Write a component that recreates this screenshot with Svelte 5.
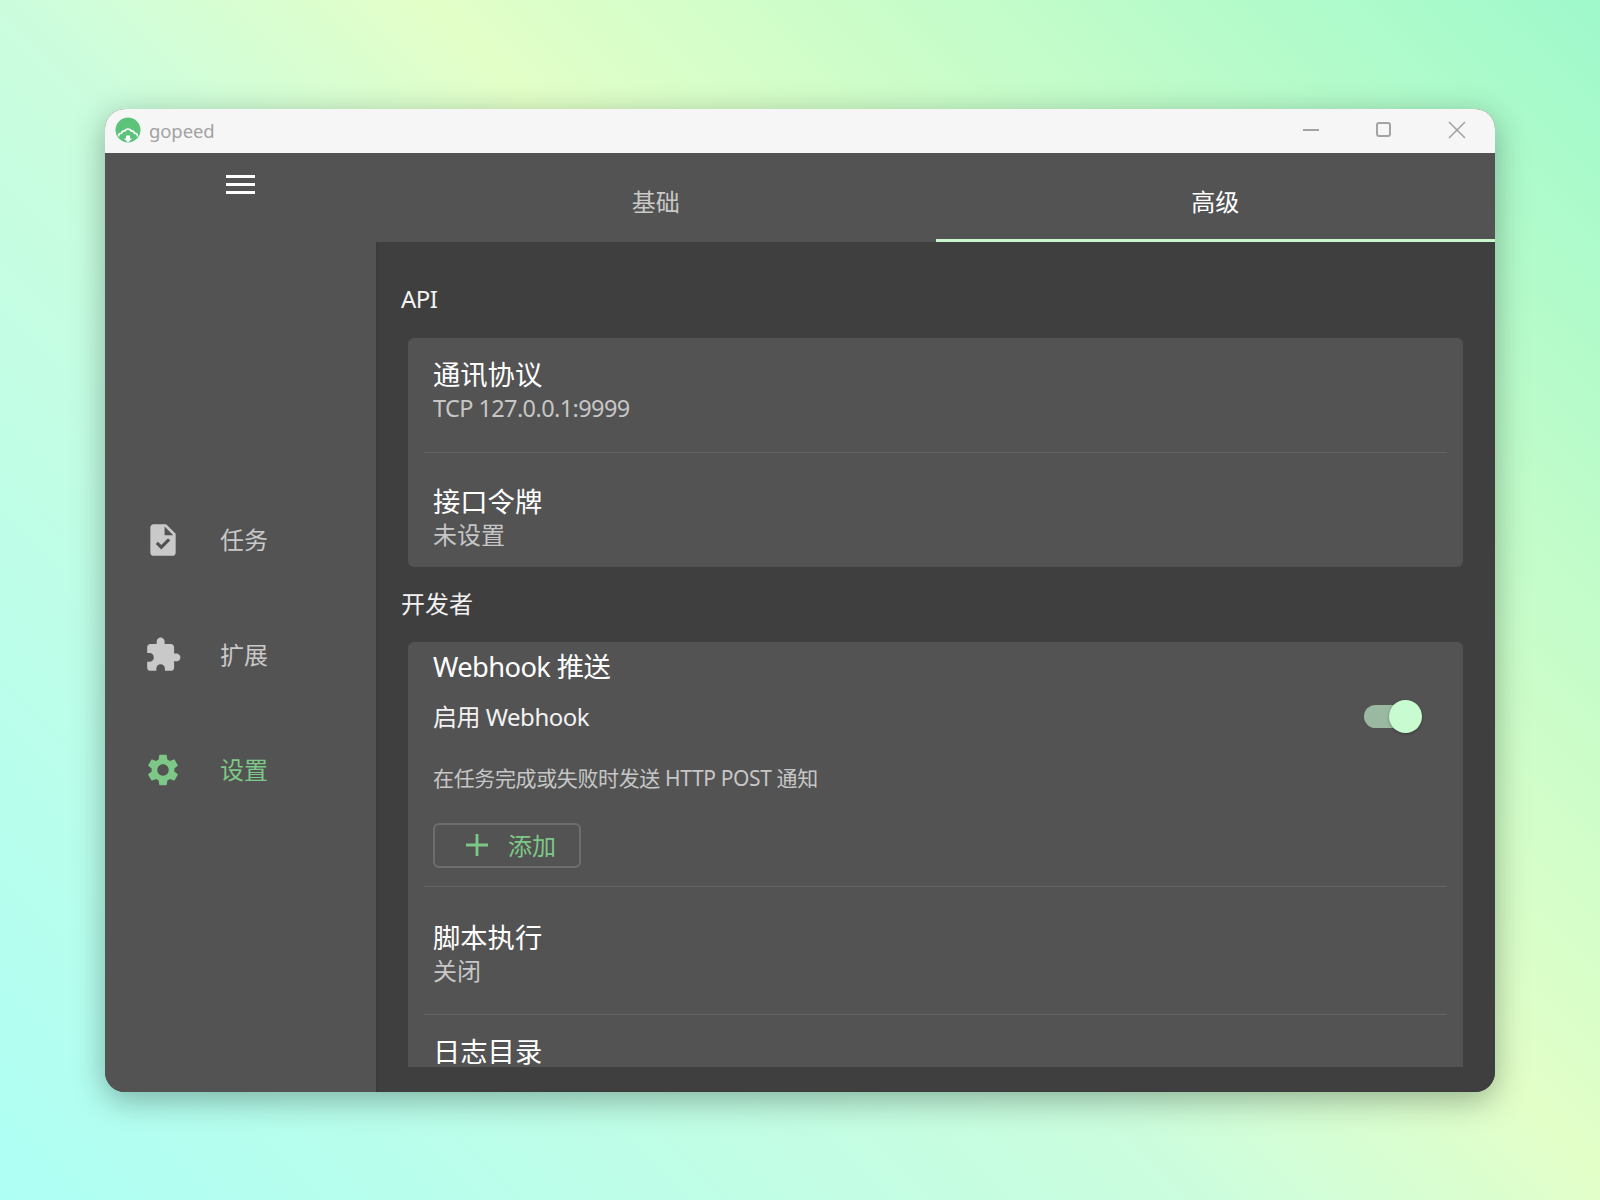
<script>
  const nav = [
    { label: '任务', d: 'M14 2H6c-1.1 0-1.99.9-1.99 2L4 20c0 1.1.89 2 1.99 2H18c1.1 0 2-.9 2-2V8l-6-6zm-3.06 16L7.4 14.46l1.41-1.41 2.12 2.12 4.24-4.24 1.41 1.41L10.94 18zM13 9V3.5L18.5 9H13z' },
    { label: '扩展', d: 'M20.5 11H19V7c0-1.1-.9-2-2-2h-4V3.5C13 2.12 11.88 1 10.5 1S8 2.12 8 3.5V5H4c-1.1 0-1.99.9-1.99 2v3.8H3.5c1.49 0 2.7 1.21 2.7 2.7s-1.21 2.7-2.7 2.7H2V20c0 1.1.9 2 2 2h3.8v-1.5c0-1.49 1.21-2.7 2.7-2.7 1.49 0 2.7 1.21 2.7 2.7V22H17c1.1 0 2-.9 2-2v-4h1.5c1.38 0 2.5-1.12 2.5-2.5S21.88 11 20.5 11z' },
    { label: '设置', active: true, d: 'M19.14 12.94c.04-.3.06-.61.06-.94 0-.32-.02-.64-.07-.94l2.03-1.58c.18-.14.23-.41.12-.61l-1.92-3.32c-.12-.22-.37-.29-.59-.22l-2.39.96c-.5-.38-1.03-.7-1.62-.94l-.36-2.54c-.04-.24-.24-.41-.48-.41h-3.84c-.24 0-.43.17-.47.41l-.36 2.54c-.59.24-1.13.57-1.62.94l-2.39-.96c-.22-.08-.47 0-.59.22L2.74 8.87c-.12.21-.08.47.12.61l2.03 1.58c-.05.3-.09.63-.09.94s.02.64.07.94l-2.03 1.58c-.18.14-.23.41-.12.61l1.92 3.32c.12.22.37.29.59.22l2.39-.96c.5.38 1.03.7 1.62.94l.36 2.54c.05.24.24.41.48.41h3.84c.24 0 .44-.17.47-.41l.36-2.54c.59-.24 1.13-.56 1.62-.94l2.39.96c.22.08.47 0 .59-.22l1.92-3.32c.12-.22.07-.47-.12-.61l-2.01-1.58zM12 15.6c-1.98 0-3.6-1.62-3.6-3.6s1.62-3.6 3.6-3.6 3.6 1.62 3.6 3.6-1.62 3.6-3.6 3.6z' }
  ]
</script>

<div class="page">
  <div class="window">
    <header class="titlebar">
      <svg class="logo" viewBox="0 0 26 26">
        <circle cx="13" cy="13" r="12.5" fill="#5cc47a" />
        <path d="M3.500 19.500c0-2.500 1.500-3.500 3-3.200 .5-2 2-2.800 3.200-2.300C10.500 12.500 11.800 12 13 12s2.500.5 3.300 2c1.200-.5 2.700.3 3.200 2.300 1.500-.3 3 .7 3 3.200" fill="none" stroke="#fff" stroke-width="1.600" />
        <path d="M11 18.500h4v3h2.200L13 25.500 8.800 21.500H11z" fill="#fff" />
      </svg>
      <span class="brand">gopeed</span>
      <div class="controls">
        <button aria-label="minimize"><span class="min"></span></button>
        <button aria-label="maximize"><span class="max"></span></button>
        <button aria-label="close">
          <svg width="18" height="18" viewBox="0 0 18 18"><path d="M1 1l16 16M17 1L1 17" stroke="#a3a3a3" stroke-width="1.600" /></svg>
        </button>
      </div>
    </header>

    <div class="body">
      <aside class="rail">
        <div class="burger"><i></i><i></i><i></i></div>
        <nav>
          {#each nav as item}
            <div class="dest" class:active={item.active}>
              <svg viewBox="0 0 24 24" width="38" height="38"><path d={item.d} fill="currentColor" /></svg>
              <span>{item.label}</span>
            </div>
          {/each}
        </nav>
      </aside>

      <main>
        <div class="tabs">
          <div class="tab">基础</div>
          <div class="tab selected">高级</div>
        </div>

        <div class="scroll">
          <h2 class="first">API</h2>
          <section class="card">
            <div class="tile">
              <div class="title">通讯协议</div>
              <div class="sub latin">TCP 127.0.0.1:9999</div>
            </div>
            <hr />
            <div class="tile low">
              <div class="title">接口令牌</div>
              <div class="sub">未设置</div>
            </div>
          </section>

          <h2>开发者</h2>
          <section class="card">
            <div class="webhook">
              <div class="title wh">Webhook 推送</div>
              <div class="enable">
                <span>启用 Webhook</span>
                <div class="switch"><span class="thumb"></span></div>
              </div>
              <p>在任务完成或失败时发送 HTTP POST 通知</p>
              <button class="add">
                <svg width="26" height="26" viewBox="0 0 26 26"><path d="M13 2v22M2 13h22" stroke="currentColor" stroke-width="2.800" /></svg>
                <span>添加</span>
              </button>
            </div>
            <hr />
            <div class="tile low tall">
              <div class="title">脚本执行</div>
              <div class="sub">关闭</div>
            </div>
            <hr />
            <div class="tile">
              <div class="title">日志目录</div>
            </div>
          </section>
        </div>
      </main>
    </div>
  </div>
</div>

<style>
  :global(body) {
    margin: 0;
    font-family: "Noto Sans", "Noto Sans CJK SC", sans-serif;
  }

  .page {
    height: 1200px;
    box-sizing: border-box;
    padding: 109px 105px 108px;
    background: linear-gradient(45deg, #aefff5 0%, #cbfddd 43%, #e3ffc8 58%, #9ff9cb 100%);
  }

  .window {
    height: 983px;
    display: flex;
    flex-direction: column;
    border-radius: 20px;
    overflow: hidden;
    background: #535353;
    box-shadow: 0 8px 32px rgba(20, 40, 30, .36);
  }

  .titlebar {
    height: 44px;
    flex: none;
    display: flex;
    align-items: center;
    padding-left: 10px;
    background: #f6f6f6;
  }

  .logo {
    width: 26px;
    height: 26px;
    margin-top: -2px;
  }

  .brand {
    margin: 0 0 2px 8px;
    color: #a2a2a2;
    font-size: 18.500px;
    letter-spacing: -.1px;
  }

  .controls {
    margin-left: auto;
    display: flex;
    padding-right: 2px;
  }

  .controls button {
    width: 73px;
    height: 44px;
    padding: 0 0 3px;
    background: none;
    border: none;
    display: flex;
    align-items: center;
    justify-content: center;
  }

  .min {
    width: 16px;
    height: 2px;
    background: #a3a3a3;
  }

  .max {
    width: 15px;
    height: 15px;
    border: 2px solid #a3a3a3;
    border-radius: 3px;
    box-sizing: border-box;
  }

  .body {
    flex: 1;
    min-height: 0;
    display: flex;
  }

  .rail {
    width: 271px;
    flex: none;
    background: #535353;
  }

  .burger {
    width: 29px;
    margin: 22px 0 0 121px;
    display: flex;
    flex-direction: column;
    gap: 5px;
  }

  .burger i {
    height: 3px;
    background: #fff;
  }

  nav {
    margin-top: 327px;
    display: flex;
    flex-direction: column;
    gap: 77px;
  }

  .dest {
    height: 38px;
    display: flex;
    align-items: center;
    padding-left: 39px;
    color: #c9c9c9;
    font-size: 24px;
  }

  .dest span {
    margin: 0 0 4px 38px;
  }

  .dest.active {
    color: #7dc887;
  }

  main {
    flex: 1;
    min-width: 0;
    display: flex;
    flex-direction: column;
    background: #3f3f3f;
    box-shadow: inset 2px 0 3px rgba(0, 0, 0, .08);
  }

  .tabs {
    height: 89px;
    flex: none;
    box-sizing: border-box;
    display: flex;
    background: #535353;
  }

  .tab {
    flex: 1;
    display: flex;
    align-items: center;
    justify-content: center;
    padding-top: 8px;
    color: #c9c9c9;
    font-size: 24px;
    border-bottom: 3px solid transparent;
  }

  .tab.selected {
    color: #fff;
    border-bottom-color: #c8f7cd;
  }

  .scroll {
    flex: 1;
    min-height: 0;
    margin-bottom: 25px;
    padding: 0 32px 0 25px;
    overflow: hidden;
  }

  h2 {
    margin: 0 0 22px;
    height: 33px;
    line-height: 33px;
    color: #f2f2f2;
    font-size: 24px;
    font-weight: 400;
  }

  h2.first {
    margin-top: 40px;
    margin-bottom: 23px;
    letter-spacing: -.6px;
  }

  .card {
    margin: 0 0 20px 7px;
    border-radius: 6px;
    background: #535353;
  }

  .tile {
    height: 114px;
    box-sizing: border-box;
    padding: 18px 25px 0;
  }

  .tile.low {
    padding-top: 30px;
  }

  .tile.tall {
    height: 127px;
    padding-top: 32px;
  }

  .title {
    color: #fff;
    font-size: 27.300px;
    line-height: 38px;
  }

  .sub {
    margin-top: -3px;
    color: #c6c6c6;
    font-size: 24px;
    line-height: 33px;
  }

  .sub.latin {
    margin-top: -2px;
    font-size: 23.500px;
    letter-spacing: -.6px;
  }

  hr {
    margin: 0 16px;
    border: none;
    border-top: 1px solid #636363;
  }

  .webhook {
    height: 244px;
    box-sizing: border-box;
    padding: 6px 25px 0;
  }

  .wh {
    line-height: 38px;
    letter-spacing: -.6px;
  }

  .enable {
    margin-top: 11px;
    height: 36px;
    display: flex;
    align-items: center;
    justify-content: space-between;
    color: #f2f2f2;
    font-size: 24px;
    letter-spacing: -.5px;
    padding-right: 23px;
  }

  .switch {
    position: relative;
    width: 51px;
    height: 23px;
    margin-top: 2px;
    border-radius: 12px;
    background: #9bb9a0;
  }

  .thumb {
    position: absolute;
    right: -7px;
    top: -5px;
    width: 33px;
    height: 33px;
    border-radius: 50%;
    background: #c8fbd0;
    box-shadow: 0 1px 3px rgba(0, 0, 0, .3);
  }

  p {
    margin: 30px 0 0;
    color: #c6c6c6;
    font-size: 21px;
    letter-spacing: -.37px;
    line-height: 30px;
  }

  .add {
    margin-top: 30px;
    width: 148px;
    height: 45px;
    padding: 0 0 2px 29px;
    display: flex;
    align-items: center;
    gap: 18px;
    background: none;
    border: 2px solid #6e6e6e;
    border-radius: 6px;
    color: #7dc887;
    font: inherit;
    font-size: 24px;
    box-sizing: border-box;
  }
</style>
